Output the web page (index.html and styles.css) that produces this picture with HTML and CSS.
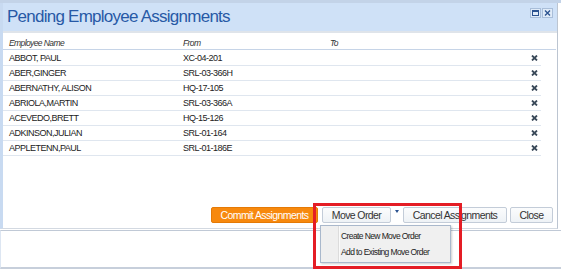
FILE: index.html
```html
<!DOCTYPE html>
<html lang="en">
<head>
    <meta charset="UTF-8" />
    <title>Pending Employee Assignments</title>
    <link rel="stylesheet" href="styles.css">
</head>
<body>

<div class="page">
    <div class="dialog">
        <div class="titlebar">
            <span class="title">Pending Employee Assignments</span>
            <div class="win-tools">
                <span class="tool"><span class="max-glyph"></span></span>
                <span class="tool">
                    <svg width="7" height="6" viewBox="0 0 7 6"><path d="M1 0.5 L6 5.5 M6 0.5 L1 5.5" stroke="#2b5290" stroke-width="1.4"/></svg>
                </span>
            </div>
        </div>

        <div class="dialog-body">
            <div class="grid-head">
                <span class="col-name">Employee Name</span>
                <span class="col-from">From</span>
                <span class="col-to">To</span>
            </div>

            <div class="grid-rows">
                <div class="row"><span class="col-name">ABBOT, PAUL</span><span class="col-from">XC-04-201</span><span class="col-to"></span><span class="del"><svg width="7" height="6" viewBox="0 0 7 6"><path d="M1 0.5 L6 5.5 M6 0.5 L1 5.5" stroke="#3b4a5a" stroke-width="1.8"/></svg></span></div>
                <div class="row"><span class="col-name">ABER,GINGER</span><span class="col-from">SRL-03-366H</span><span class="col-to"></span><span class="del"><svg width="7" height="6" viewBox="0 0 7 6"><path d="M1 0.5 L6 5.5 M6 0.5 L1 5.5" stroke="#3b4a5a" stroke-width="1.8"/></svg></span></div>
                <div class="row"><span class="col-name">ABERNATHY, ALISON</span><span class="col-from">HQ-17-105</span><span class="col-to"></span><span class="del"><svg width="7" height="6" viewBox="0 0 7 6"><path d="M1 0.5 L6 5.5 M6 0.5 L1 5.5" stroke="#3b4a5a" stroke-width="1.8"/></svg></span></div>
                <div class="row"><span class="col-name">ABRIOLA,MARTIN</span><span class="col-from">SRL-03-366A</span><span class="col-to"></span><span class="del"><svg width="7" height="6" viewBox="0 0 7 6"><path d="M1 0.5 L6 5.5 M6 0.5 L1 5.5" stroke="#3b4a5a" stroke-width="1.8"/></svg></span></div>
                <div class="row"><span class="col-name">ACEVEDO,BRETT</span><span class="col-from">HQ-15-126</span><span class="col-to"></span><span class="del"><svg width="7" height="6" viewBox="0 0 7 6"><path d="M1 0.5 L6 5.5 M6 0.5 L1 5.5" stroke="#3b4a5a" stroke-width="1.8"/></svg></span></div>
                <div class="row"><span class="col-name">ADKINSON,JULIAN</span><span class="col-from">SRL-01-164</span><span class="col-to"></span><span class="del"><svg width="7" height="6" viewBox="0 0 7 6"><path d="M1 0.5 L6 5.5 M6 0.5 L1 5.5" stroke="#3b4a5a" stroke-width="1.8"/></svg></span></div>
                <div class="row"><span class="col-name">APPLETENN,PAUL</span><span class="col-from">SRL-01-186E</span><span class="col-to"></span><span class="del"><svg width="7" height="6" viewBox="0 0 7 6"><path d="M1 0.5 L6 5.5 M6 0.5 L1 5.5" stroke="#3b4a5a" stroke-width="1.8"/></svg></span></div>
            </div>

            <div class="actions">
                <button class="btn btn-primary btn-commit">Commit Assignments</button>
                <button class="btn btn-move">Move Order</button>
                <span class="split-arrow"></span>
                <button class="btn btn-cancel">Cancel Assignments</button>
                <button class="btn btn-close">Close</button>
            </div>
        </div>
    </div>

    <div class="page-strip"></div>

    <!-- split button menu, opened -->
    <div class="menu">
        <div class="menu-item">Create New Move Order</div>
        <div class="menu-item">Add to Existing Move Order</div>
    </div>

    <div class="highlight"></div>
</div>

</body>
</html>
```

FILE: styles.css
```css
body {
  margin: 0;
  background: #fff;
}
.page {
  position: relative;
  width: 561px;
  height: 270px;
  border-top: 3px solid #c3d3e8;
  box-sizing: border-box;
  font-family: "Liberation Sans", Arial, sans-serif;
  color: #222;
}
.dialog {
  width: 558px;
  box-sizing: border-box;
  border-left: 3px solid #c8daf1;
  border-right: 1px solid #bcc5d1;
  border-bottom: 1px solid #d3d9e1;
}
.titlebar {
  height: 28px;
  background: #cfe1f7;
  border-bottom: 2px solid #dfe4ea;
  display: flex;
  justify-content: space-between;
  align-items: flex-start;
}
.title {
  font-size: 17px;
  letter-spacing: -0.75px;
  line-height: 28px;
  color: #2759a6;
  padding-left: 4px;
}
.win-tools {
  display: flex;
  gap: 1px;
  margin: 5px 4px 0 0;
}
.tool {
  width: 9px;
  height: 8px;
  background: #e0ebf8;
  border: 1px solid #a9bed9;
  display: flex;
  align-items: center;
  justify-content: center;
}
.max-glyph {
  width: 5px;
  height: 3px;
  border: 1px solid #2b5290;
  border-top-width: 2px;
}
.dialog-body {
  height: 195px;
  background: #fff;
  display: flex;
  flex-direction: column;
}
.grid-head {
  display: flex;
  width: 553px;
  height: 17px;
  box-sizing: border-box;
  padding-top: 5px;
  border-bottom: 1px solid #c6d4e7;
  font-size: 8.5px;
  letter-spacing: -0.6px;
  font-style: italic;
  line-height: 11px;
  color: #333;
}
.col-name {
  width: 174px;
  padding-left: 6px;
}
.col-from {
  width: 147px;
}
.col-to {
  flex: 1;
}
.grid-rows {
  width: 538px;
  padding-top: 1px;
}
.row {
  display: flex;
  align-items: center;
  height: 14px;
  border-bottom: 1px solid #dfe6ef;
  font-size: 9px;
  letter-spacing: -0.5px;
}
.del {
  width: 7px;
  height: 6px;
  padding-right: 3px;
  display: flex;
}
.actions {
  margin-top: auto;
  padding: 0 4px 5px 0;
  display: flex;
  justify-content: flex-end;
  align-items: center;
}
.btn {
  height: 16px;
  box-sizing: border-box;
  padding: 0;
  font-family: "Liberation Sans", Arial, sans-serif;
  font-size: 10.5px;
  letter-spacing: -0.6px;
  line-height: 14px;
  color: #333;
  background: linear-gradient(#fbfcfd, #eef2f6);
  border: 1px solid #c3ccd8;
  border-radius: 2px;
}
.btn-primary {
  color: #fff;
  background: #f7890e;
  border-color: #e57a06;
}
.btn-commit { width: 107px; margin-right: 4px; }
.btn-move { width: 69px; }
.btn-cancel { width: 104px; margin-right: 3px; }
.btn-close { width: 43px; }
.split-arrow {
  width: 12px;
  height: 16px;
  display: flex;
  justify-content: center;
  align-items: flex-start;
}
.split-arrow::before {
  content: "";
  margin-top: 3px;
  border-left: 2.5px solid transparent;
  border-right: 2.5px solid transparent;
  border-top: 3px solid #2b5290;
}
.page-strip {
  margin-top: 1px;
  height: 36px;
  border-top: 1px solid #c0c9d6;
  border-bottom: 2px solid #c7cfdb;
  border-left: 1px solid #dde6f2;
}
.menu {
  position: absolute;
  left: 320px;
  top: 222px;
  width: 131px;
  box-sizing: border-box;
  padding: 2px 0;
  background: linear-gradient(90deg, #efefef 17px, #dcdcdc 17px, #dcdcdc 18px, #fafafa 18px, #fafafa 19px, #f0f0f0 19px);
  border: 1px solid #a9b8cc;
  box-shadow: 1px 1px 2px rgba(0, 0, 0, 0.2);
}
.menu-item {
  height: 16px;
  line-height: 16px;
  padding-left: 20px;
  font-size: 8.5px;
  letter-spacing: -0.6px;
  white-space: nowrap;
  color: #222;
}
.highlight {
  position: absolute;
  left: 313px;
  top: 200px;
  width: 149px;
  height: 66px;
  box-sizing: border-box;
  border: 3px solid #e41d25;
}
```
